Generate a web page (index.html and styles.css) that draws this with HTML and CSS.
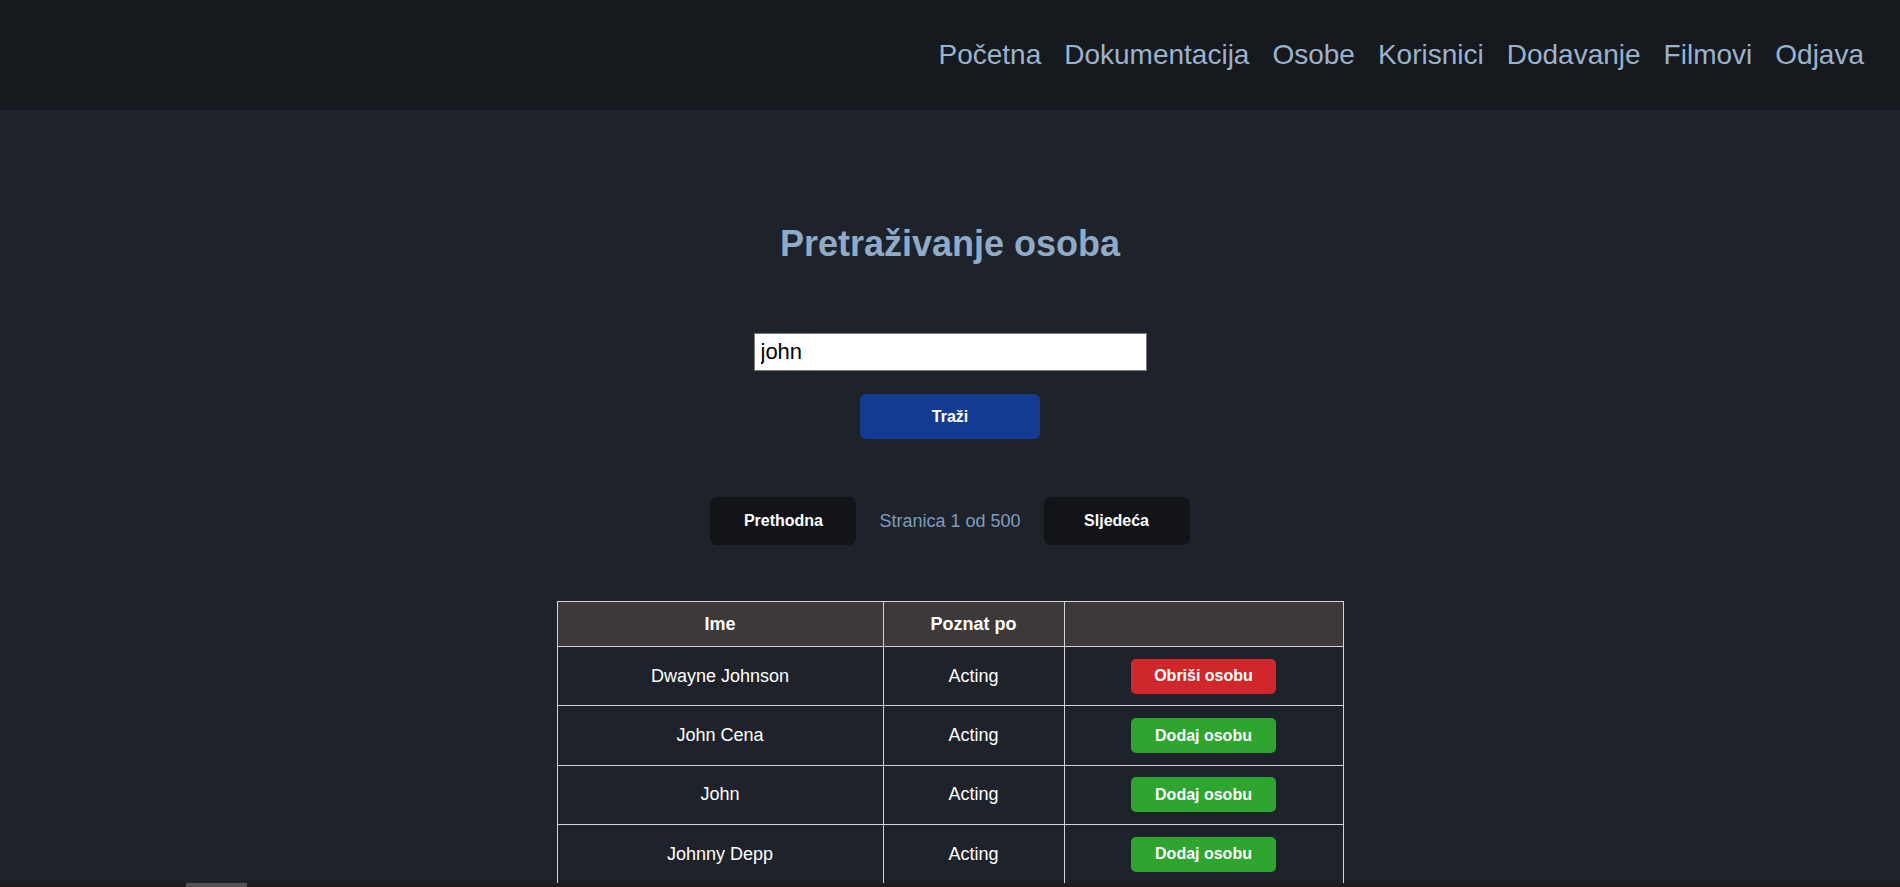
FILE: index.html
```html
<!DOCTYPE html>
<html lang="hr">
<head>
<meta charset="utf-8">
<title>Pretraživanje osoba</title>
<link rel="stylesheet" href="styles.css">
</head>
<body>
<header class="topbar">
  <nav class="nav">
    <a href="#" class="nav-link">Početna</a>
    <a href="#" class="nav-link">Dokumentacija</a>
    <a href="#" class="nav-link">Osobe</a>
    <a href="#" class="nav-link">Korisnici</a>
    <a href="#" class="nav-link">Dodavanje</a>
    <a href="#" class="nav-link">Filmovi</a>
    <a href="#" class="nav-link">Odjava</a>
  </nav>
</header>
<main class="content">
  <h1 class="title">Pretraživanje osoba</h1>
  <form class="search">
    <input class="search-input" type="text" value="john">
    <button type="button" class="btn btn-search">Traži</button>
  </form>
  <div class="pager">
    <button type="button" class="btn btn-page">Prethodna</button>
    <span class="pager-info">Stranica 1 od 500</span>
    <button type="button" class="btn btn-page">Sljedeća</button>
  </div>
  <table class="people">
    <colgroup>
      <col class="col-name">
      <col class="col-known">
      <col class="col-action">
    </colgroup>
    <thead>
      <tr><th>Ime</th><th>Poznat po</th><th></th></tr>
    </thead>
    <tbody>
      <tr><td>Dwayne Johnson</td><td>Acting</td><td><button type="button" class="btn btn-row btn-delete">Obriši osobu</button></td></tr>
      <tr><td>John Cena</td><td>Acting</td><td><button type="button" class="btn btn-row btn-add">Dodaj osobu</button></td></tr>
      <tr><td>John</td><td>Acting</td><td><button type="button" class="btn btn-row btn-add">Dodaj osobu</button></td></tr>
      <tr><td>Johnny Depp</td><td>Acting</td><td><button type="button" class="btn btn-row btn-add">Dodaj osobu</button></td></tr>
    </tbody>
  </table>
</main>
<div class="edge-strip"><div class="edge-thumb"></div></div>
</body>
</html>
```
FILE: styles.css
```css
html, body {
  margin: 0;
  padding: 0;
  overflow: hidden;
}
body {
  background: #1e232b;
  font-family: "Liberation Sans", Arial, sans-serif;
  color: #ffffff;
  height: 887px;
}
.topbar {
  height: 110px;
  background: #16191e;
  display: flex;
  align-items: center;
  justify-content: flex-end;
  padding-right: 36px;
}
.nav {
  display: flex;
  gap: 23px;
}
.nav-link {
  color: #9ab3cd;
  text-decoration: none;
  font-size: 28px;
  line-height: 32px;
}
.content {
  display: flex;
  flex-direction: column;
  align-items: center;
  padding-top: 113px;
}
.title {
  margin: 0;
  font-size: 36px;
  line-height: 41px;
  font-weight: bold;
  color: #8fabc8;
}
.search {
  margin-top: 69px;
  display: flex;
  flex-direction: column;
  align-items: center;
}
.search-input {
  box-sizing: border-box;
  width: 393px;
  height: 38px;
  border: 1px solid #767676;
  padding: 0 6px;
  font-family: "Liberation Sans", Arial, sans-serif;
  font-size: 22px;
  color: #000;
  background: #fff;
  outline: none;
}
.btn {
  border: none;
  font-family: "Liberation Sans", Arial, sans-serif;
  font-weight: bold;
  font-size: 16px;
  color: #fff;
  cursor: pointer;
  padding: 0;
}
.btn-search {
  margin-top: 23px;
  width: 180px;
  height: 45px;
  border-radius: 6px;
  background: #143b92;
}
.pager {
  margin-top: 58px;
  display: flex;
  align-items: center;
  gap: 23px;
}
.btn-page {
  width: 146px;
  height: 48px;
  border-radius: 7px;
  background: #121418;
}
.pager-info {
  font-size: 18px;
  color: #7f9cbc;
}
.people {
  margin-top: 56px;
  width: 786px;
  table-layout: fixed;
  border-collapse: collapse;
  font-size: 18px;
}
.col-name { width: 326px; }
.col-known { width: 181px; }
.col-action { width: 279px; }
.people th,
.people td {
  border: 1px solid #d4d4d4;
  text-align: center;
  vertical-align: middle;
  line-height: 21px;
}
.people th {
  background: #3d3939;
  font-weight: bold;
  padding: 11.5px 10px;
}
.people td {
  padding: 11.7px 10px;
}
.btn-row {
  width: 145px;
  height: 35px;
  border-radius: 5px;
  vertical-align: middle;
}
.btn-delete { background: #d0282a; }
.btn-add { background: #2da52f; }
.edge-strip {
  position: fixed;
  left: 0;
  right: 0;
  bottom: 0;
  height: 4px;
  background: #221c18;
}
.edge-thumb {
  margin-left: 186px;
  width: 61px;
  height: 4px;
  background: #57524f;
}
```
